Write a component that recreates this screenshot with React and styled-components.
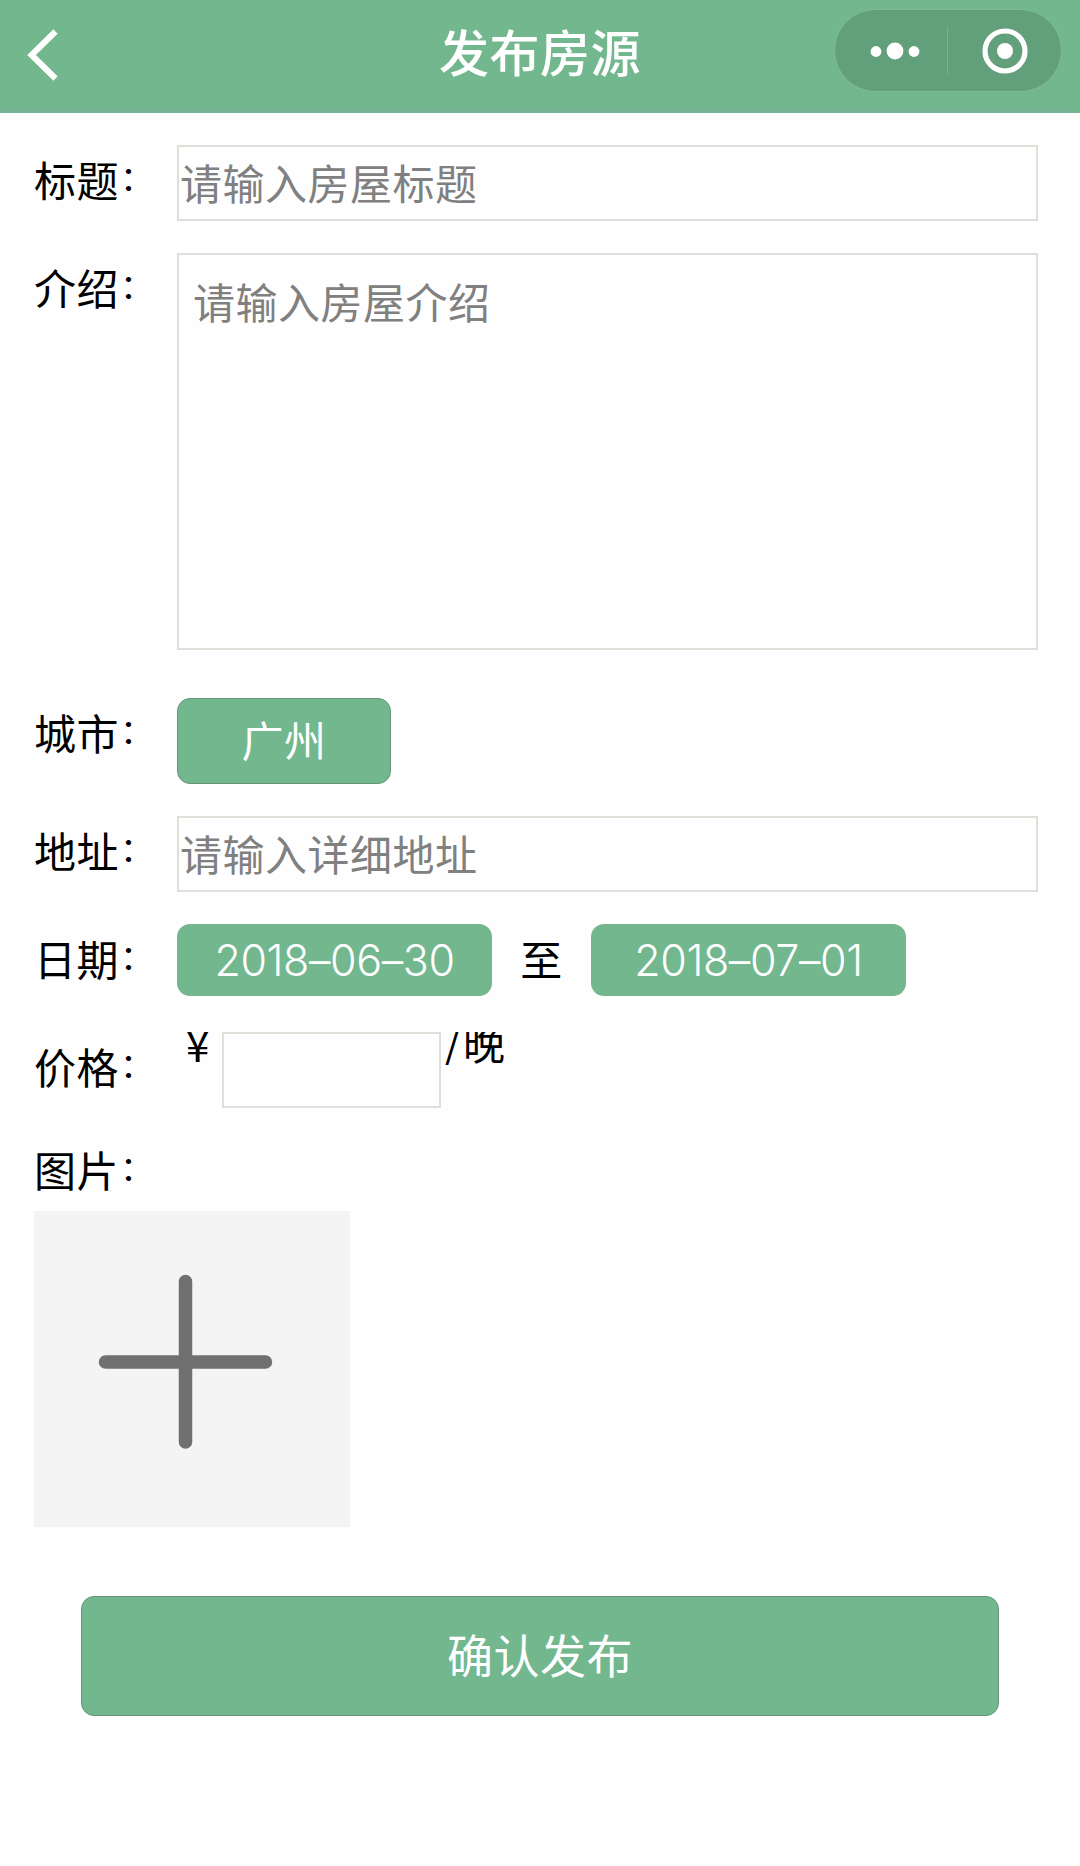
import React from "react";
import styled, { createGlobalStyle } from "styled-components";

const GREEN = "#72b78e";
const CJK = '"Noto Sans CJK SC", "Noto Sans", sans-serif';

const GlobalStyle = createGlobalStyle`
  *, *::before, *::after { box-sizing: border-box; }
  body { margin: 0; background: #fefefe; }
  input, textarea, button { font: inherit; margin: 0; }
`;

const Page = styled.div`
  width: 1080px;
  height: 1866px;
  overflow: hidden;
  background: #fefefe;
  color: #000;
  font-family: ${CJK};
  font-size: 42px;
  letter-spacing: 0.5px;
`;

const Header = styled.header`
  display: grid;
  grid-template-columns: 1fr auto 1fr;
  height: 113px;
  background: ${GREEN};
  border-bottom: 3px solid #76b295;
`;

const Back = styled.button`
  justify-self: start;
  align-self: start;
  margin: 27px 0 0 26px;
  padding: 0;
  border: 0;
  background: none;
  svg { display: block; }
`;

const Title = styled.h1`
  margin: 0;
  padding-top: 12px;
  font-size: 50px;
  font-weight: 500;
  line-height: 76px;
  letter-spacing: 0.5px;
  color: #fff;
`;

const Capsule = styled.div`
  justify-self: end;
  display: flex;
  align-items: center;
  width: 228px;
  height: 83px;
  margin: 9px 18px 0 0;
  border: 1px solid #7ebb96;
  border-radius: 42px;
  background: #629f7b;
`;

const CapsuleHalf = styled.div`
  flex: none;
  width: 112px;
  display: flex;
  justify-content: center;
  padding-left: ${(p) => p.$inset || 0}px;
  svg { display: block; }
`;

const CapsuleLine = styled.div`
  width: 1px;
  height: 48px;
  background: #7cb292;
`;

const Form = styled.main`
  display: flex;
  flex-direction: column;
  padding: 32px 42px 0 34px;
`;

const Row = styled.div`
  display: flex;
  align-items: flex-start;
  height: ${(p) => p.$height}px;
  margin-bottom: ${(p) => p.$gap}px;
`;

const Label = styled.label`
  flex: none;
  width: 143px;
  padding-top: 9px;
  line-height: 50px;
  white-space: nowrap;
`;

const Colon = styled.span`
  display: inline-block;
  padding-left: 1px;
  font-size: 34px;
  line-height: 40px;
  transform: translateY(-6px);
`;

const TextInput = styled.input`
  flex: ${(p) => (p.$width ? "none" : 1)};
  width: ${(p) => p.$width || 0}px;
  height: 76px;
  padding: 0 0 3px 1px;
  border: 2px solid #dfdfda;
  border-radius: 0;
  background: #fefefe;
  letter-spacing: inherit;
  outline: none;
  &::placeholder { color: #808080; opacity: 1; }
`;

const TextBox = styled.textarea`
  flex: 1;
  height: 397px;
  padding: 18px 14px;
  border: 2px solid #dfdfda;
  border-radius: 0;
  background: #fefefe;
  line-height: 56px;
  letter-spacing: inherit;
  resize: none;
  outline: none;
  &::placeholder { color: #808080; opacity: 1; }
`;

const Button = styled.button`
  display: flex;
  align-items: center;
  justify-content: center;
  width: ${(p) => p.$width}px;
  height: ${(p) => p.$height}px;
  padding: 0 0 ${(p) => p.$lift || 0}px;
  border: 1px solid #659579;
  border-radius: 13px;
  background: ${GREEN};
  color: #fff;
  font-size: ${(p) => p.$size || 42}px;
  letter-spacing: 0.5px;
`;

const DateChip = styled.div`
  width: 315px;
  height: 72px;
  border-radius: 13px;
  background: ${GREEN};
  color: #fff;
  font-family: Inter, "Noto Sans", sans-serif;
  font-size: 43px;
  font-weight: 350;
  line-height: 72px;
  letter-spacing: -0.4px;
  text-align: center;
`;

const Until = styled.span`
  width: 99px;
  padding-top: 9px;
  line-height: 50px;
  text-align: center;
`;

const Price = styled.div`
  display: flex;
  align-items: flex-start;
  height: 76px;
  overflow: hidden;
`;

const Unit = styled.span`
  width: ${(p) => p.$width || 90}px;
  padding-left: ${(p) => p.$inset}px;
  margin-top: ${(p) => p.$top}px;
  line-height: 50px;
  white-space: nowrap;
`;

const Slash = styled.span`
  display: inline-block;
  width: 18px;
  line-height: 50px;
  transform: translateY(-3px);
`;

const Picker = styled.button`
  display: block;
  width: 316px;
  height: 316px;
  padding: 0;
  border: 0;
  background: #f4f4f4;
  svg { display: block; }
`;

const Submit = styled.div`
  padding: 69px 0 0 47px;
`;

const Field = ({ name, height, gap, children }) => (
  <Row $height={height} $gap={gap}>
    <Label>
      {name}
      <Colon>：</Colon>
    </Label>
    {children}
  </Row>
);

export default function App() {
  return (
    <Page>
      <GlobalStyle />
      <Header>
        <Back aria-label="返回">
          <svg width="36" height="56" viewBox="0 0 36 56" fill="none" stroke="#fff" strokeWidth="6">
            <path d="M29.5 4.5 5.5 28l24 23.5" />
          </svg>
        </Back>
        <Title>发布房源</Title>
        <Capsule>
          <CapsuleHalf $inset={7}>
            <svg width="50" height="20" viewBox="0 0 50 20" fill="#fff">
              <circle cx="6" cy="10.5" r="5.4" />
              <circle cx="25" cy="10" r="8.4" />
              <circle cx="44" cy="10.5" r="5.4" />
            </svg>
          </CapsuleHalf>
          <CapsuleLine />
          <CapsuleHalf $inset={2}>
            <svg width="46" height="46" viewBox="0 0 46 46">
              <circle cx="23" cy="23" r="20" fill="none" stroke="#fff" strokeWidth="5.2" />
              <circle cx="23" cy="23" r="8" fill="#fff" />
            </svg>
          </CapsuleHalf>
        </Capsule>
      </Header>

      <Form>
        <Field name="标题" height={76} gap={32}>
          <TextInput placeholder="请输入房屋标题" />
        </Field>
        <Field name="介绍" height={397} gap={48}>
          <TextBox placeholder="请输入房屋介绍" />
        </Field>
        <Field name="城市" height={86} gap={32}>
          <Button $width={214} $height={86} $lift={6}>广州</Button>
        </Field>
        <Field name="地址" height={76} gap={32}>
          <TextInput placeholder="请输入详细地址" />
        </Field>
        <Field name="日期" height={72} gap={36}>
          <DateChip>2018–06–30</DateChip>
          <Until>至</Until>
          <DateChip>2018–07–01</DateChip>
        </Field>
        <Field name="价格" height={76} gap={27}>
          <Price>
            <Unit $width={45} $inset={9} $top={-13}>¥</Unit>
            <TextInput $width={219} />
            <Unit $inset={4} $top={-15}>
              <Slash>/</Slash>晚
            </Unit>
          </Price>
        </Field>
        <Field name="图片" height={76} gap={0} />
        <Picker aria-label="添加图片">
          <svg width="316" height="316" viewBox="0 0 316 316" stroke="#707070" strokeWidth="13.5" strokeLinecap="round">
            <path d="M151.5 70.5v160.5M71.5 151h160" />
          </svg>
        </Picker>
        <Submit>
          <Button $width={918} $height={120} $size={46} $lift={7}>确认发布</Button>
        </Submit>
      </Form>
    </Page>
  );
}
